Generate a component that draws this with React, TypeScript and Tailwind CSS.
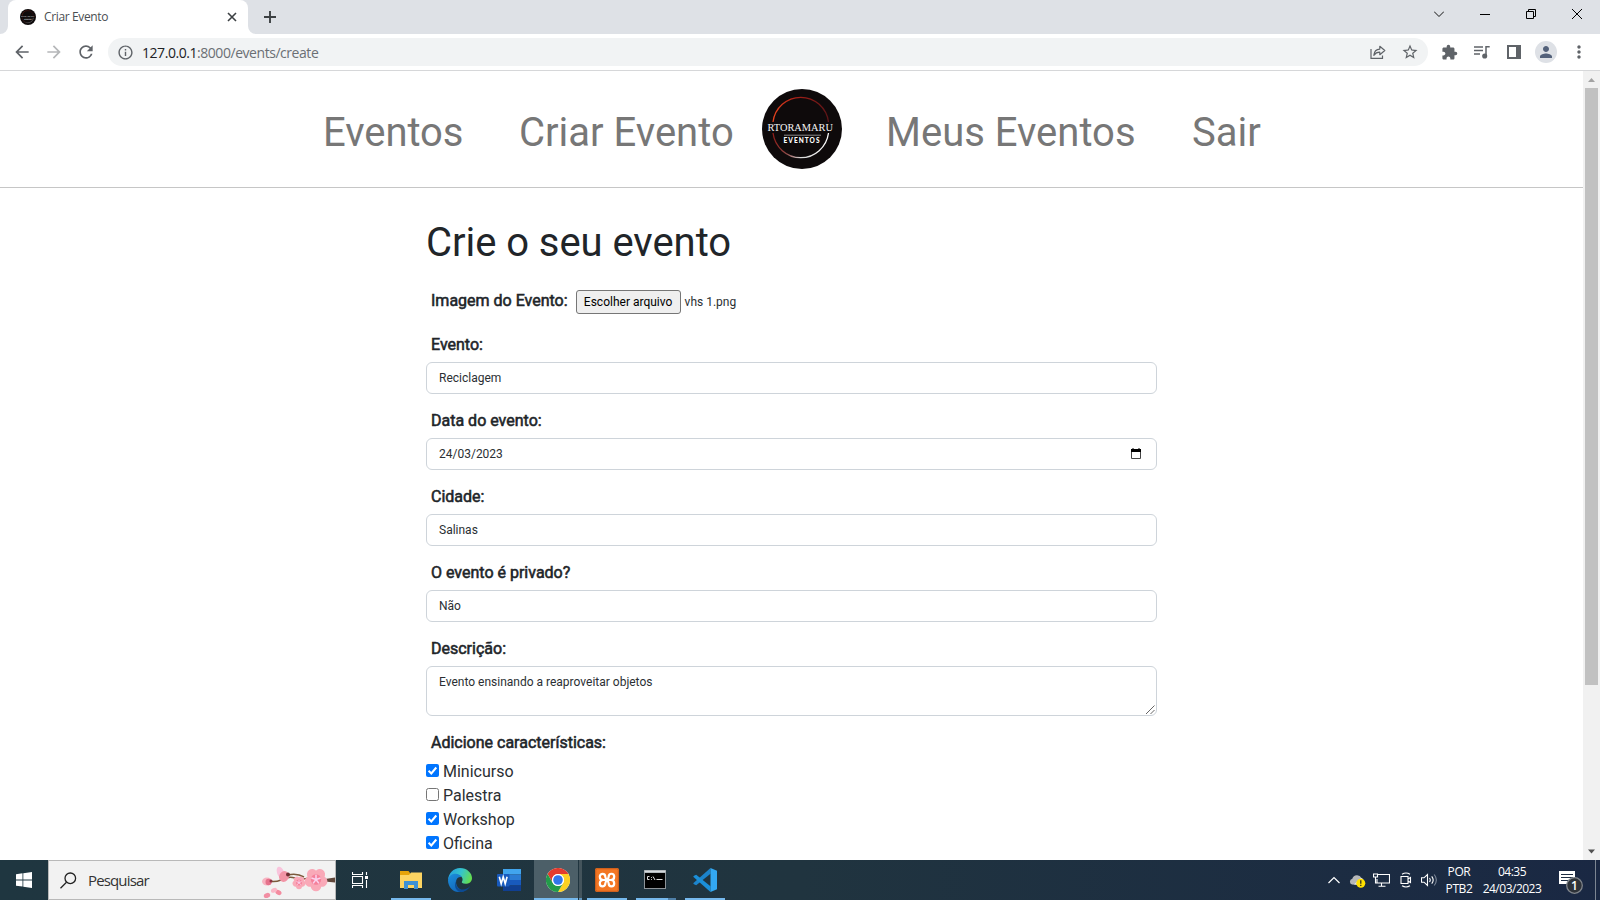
import type { ReactNode } from "react";
import {
  MdArrowBack,
  MdArrowForward,
  MdRefresh,
  MdInfoOutline,
  MdStarBorder,
  MdExtension,
  MdPerson,
  MdMoreVert,
} from "react-icons/md";

const ui = "font-['Open_Sans','Noto_Sans',sans-serif]";

function EventLogo({ className }: { className: string }) {
  return (
    <svg viewBox="0 0 80 80" className={className}>
      <defs>
        <linearGradient id="ringTop" x1="0" x2="1" y1="0" y2="0">
          <stop offset="0" stopColor="#e8431d" />
          <stop offset="0.4" stopColor="#a82018" />
          <stop offset="1" stopColor="#5c1416" />
        </linearGradient>
        <linearGradient id="ringBottom" x1="0" x2="1" y1="0" y2="0">
          <stop offset="0" stopColor="#8f1d18" />
          <stop offset="0.25" stopColor="#8f4a48" />
          <stop offset="0.5" stopColor="#d8d8d8" />
          <stop offset="1" stopColor="#fff" />
        </linearGradient>
      </defs>
      <circle cx="40" cy="40" r="40" fill="#0e0a0b" />
      <path d="M11 33A28 28.500 0 0 1 66.500 33" fill="none" stroke="url(#ringTop)" strokeWidth="1.300" />
      <path d="M11 44A28 28.500 0 0 0 66.500 44" fill="none" stroke="url(#ringBottom)" strokeWidth="1.300" />
      <text x="5.500" y="42" textLength="65.500" lengthAdjust="spacingAndGlyphs" fill="#f4f4f4" fontSize="10.500" fontFamily="Liberation Serif, serif">RTORAMARU</text>
      <path d="M22 46.200h37" stroke="#aaa" strokeWidth="0.800" />
      <text x="21.500" y="53.500" textLength="36" fill="#fff" fontSize="6.500" fontWeight="900" fontFamily="Lato, sans-serif">EVENTOS</text>
    </svg>
  );
}

function ShareIcon() {
  return (
    <svg viewBox="0 0 16 16" className="size-4" fill="none" stroke="#5f6368" strokeWidth="1.200">
      <path d="M1 5v9.400h11.500v-3" />
      <path d="M3.800 11.300c.4-4 2.600-6 6-6.200V2.300l5 4.200-5 4.200V8.200c-2.600 0-4.400.8-6 3.100z" strokeLinejoin="round" />
    </svg>
  );
}

function TabBar() {
  return (
    <div className="flex h-[34px] bg-[#dee1e6]">
      <svg viewBox="0 0 8 34" className="h-[34px] w-2">
        <path d="M8 26v8H0a8 8 0 0 0 8-8z" fill="#fff" />
      </svg>
      <div className="flex h-[34px] w-60 items-center rounded-t-lg bg-white pl-3">
        <EventLogo className="size-4" />
        <span className={`${ui} ml-2 w-[176px] text-[12px] tracking-[-0.36px] text-[#4a4e52]`}>Criar Evento</span>
        <svg viewBox="0 0 10 10" className="ml-[7px] size-[10px]" stroke="#3c4043" strokeWidth="1.600">
          <path d="M1 1l8 8M9 1l-8 8" />
        </svg>
      </div>
      <svg viewBox="0 0 8 34" className="h-[34px] w-2">
        <path d="M0 26v8h8a8 8 0 0 1-8-8z" fill="#fff" />
      </svg>
      <svg viewBox="0 0 12 12" className="mt-[11px] ml-2 size-3" stroke="#3c4043" strokeWidth="1.900">
        <path d="M6 0v12M0 6h12" />
      </svg>
      <div className="ml-auto flex h-7 items-center gap-[36px] pr-[18px]">
        <svg viewBox="0 0 10 10" className="size-[10px]" fill="none" stroke="#111">
          <path d="M0 2.500l5 5 5-5" />
        </svg>
        <svg viewBox="0 0 10 10" className="size-[10px]" stroke="#000">
          <path d="M0 5.500h10" />
        </svg>
        <svg viewBox="0 0 10 10" className="size-[10px]" fill="none" stroke="#000">
          <path d="M.5 2.500h7v7h-7zM2.500 2.500v-2h7v7h-2" />
        </svg>
        <svg viewBox="0 0 10 10" className="size-[10px]" stroke="#000">
          <path d="M0 0l10 10M10 0L0 10" />
        </svg>
      </div>
    </div>
  );
}

function Toolbar() {
  return (
    <div className="flex h-[37px] items-center border-b border-[#d6d7d9] bg-white text-[#5f6368]">
      <MdArrowBack className="ml-3 size-5" />
      <MdArrowForward className="ml-3 size-5 text-[#b5b7b9]" />
      <MdRefresh className="ml-3 size-5" />
      <div className="ml-3 flex h-7 w-[1320px] items-center rounded-full bg-[#f1f3f4]">
        <MdInfoOutline className="ml-[9px] size-[17px]" />
        <span className={`${ui} ml-2 text-[14px] tracking-[-0.45px] text-[#6b6f74]`}>
          <span className="text-[#202124]">127.0.0.1</span>:8000/events/create
        </span>
        <div className="mr-[9px] ml-auto flex items-center gap-[15px]">
          <ShareIcon />
          <MdStarBorder className="size-[18px]" />
        </div>
      </div>
      <MdExtension className="ml-[13px] size-[17px]" />
      <svg viewBox="0 0 16 14" className="ml-4 h-[14px] w-4" fill="none" stroke="#5f6368" strokeWidth="1.500">
        <path d="M0 2h9M0 5.500h9M0 9h6" />
        <path d="M12 11V1.800h3.700" />
        <circle cx="10.700" cy="11" r="1.800" fill="#5f6368" />
      </svg>
      <svg viewBox="0 0 14 14" className="ml-[17px] size-[14px]">
        <path d="M0 0h14v14H0zM2 2v10h7V2z" fill="#5f6368" fillRule="evenodd" />
      </svg>
      <div className="ml-[14px] flex size-[22px] items-center justify-center rounded-full bg-[#dee1e6] text-[#53617a]">
        <MdPerson className="size-[18px]" />
      </div>
      <MdMoreVert className="ml-3 size-5" />
    </div>
  );
}

function Nav() {
  return (
    <nav className="flex h-[117px] items-start border-b border-[#c6c6c6] pt-[18px] text-[40px] leading-[60px] text-[#777]">
      <a className="mt-[14px] ml-[323px] w-[196px] tracking-[-0.05px]">Eventos</a>
      <a className="mt-[14px] w-[243px] whitespace-nowrap">Criar Evento</a>
      <EventLogo className="size-20" />
      <a className="mt-[14px] ml-[44px] w-[306px] whitespace-nowrap">Meus Eventos</a>
      <a className="mt-[14px]">Sair</a>
    </nav>
  );
}

function Label({ children }: { children: ReactNode }) {
  return (
    <div className="pl-[5px] text-[16px] leading-6 text-[#212529] [-webkit-text-stroke:0.55px_#212529]">{children}</div>
  );
}

function Field({ label, value, icon }: { label: string; value: string; icon?: ReactNode }) {
  return (
    <div className="flex h-[76px] flex-col">
      <Label>{label}</Label>
      <div className="mt-[5px] flex h-8 items-center justify-between rounded-[6px] border border-[#ced4da] pr-[15px] pl-3 text-[12px] text-[#2b2f33]">
        <span>{value}</span>
        {icon}
      </div>
    </div>
  );
}

function CalendarIcon() {
  return (
    <svg viewBox="0 0 10 11" className="-mt-px h-[11px] w-[10px]">
      <path d="M.5 2h9v8.500h-9z" fill="none" stroke="#444" />
      <path d="M0 1h10v3H0zM1.500 0h1v1h-1zM7.500 0h1v1h-1z" fill="#000" />
    </svg>
  );
}

function Check({ label, checked }: { label: string; checked: boolean }) {
  return (
    <div className="flex h-6 items-center text-[16px] leading-6 text-[#2b2f33]">
      <svg viewBox="0 0 13 13" className="mr-1 -mt-[3px] size-[13px]">
        {checked ? (
          <>
            <rect width="13" height="13" rx="2" fill="#0075ff" />
            <path d="M2.600 6.800l2.700 2.700 5-6" fill="none" stroke="#fff" strokeWidth="2" />
          </>
        ) : (
          <rect x=".5" y=".5" width="12" height="12" rx="2" fill="#fff" stroke="#767676" />
        )}
      </svg>
      <span>{label}</span>
    </div>
  );
}

function EventForm() {
  return (
    <main className="ml-[426px] w-[731px] pt-[31px]">
      <h1 className="text-[40px] leading-[48px] tracking-[-0.05px] text-[#212529]">Crie o seu evento</h1>
      <div className="mt-[22px] flex h-[25px] items-start">
        <Label>Imagem do Evento:</Label>
        <div className="mt-px ml-2 flex h-6 w-[105px] items-center justify-center rounded-[3px] border border-[#767676] bg-[#efefef] text-[12px] text-black">
          Escolher arquivo
        </div>
        <span className="mt-px ml-1 text-[12px] leading-6 text-[#2b2f33]">vhs 1.png</span>
      </div>
      <div className="mt-[19px]">
        <Field label="Evento:" value="Reciclagem" />
        <Field label="Data do evento:" value="24/03/2023" icon={<CalendarIcon />} />
        <Field label="Cidade:" value="Salinas" />
        <Field label="O evento é privado?" value="Não" />
      </div>
      <Label>Descrição:</Label>
      <div className="mt-[5px] flex h-[50px] items-end justify-between rounded-[6px] border border-[#ced4da] pr-px pl-3 text-[12px] text-[#2b2f33]">
        <span className="self-start pt-[6px] leading-[18px]">Evento ensinando a reaproveitar objetos</span>
        <svg viewBox="0 0 9 9" className="mb-px size-[9px]" stroke="#555" strokeWidth="0.900">
          <path d="M0 9l8.500-8.500M4.500 9l4-4" />
        </svg>
      </div>
      <div className="mt-[15px]">
        <Label>Adicione características:</Label>
      </div>
      <div className="mt-[5px]">
        <Check label="Minicurso" checked />
        <Check label="Palestra" checked={false} />
        <Check label="Workshop" checked />
        <Check label="Oficina" checked />
      </div>
    </main>
  );
}

function Scrollbar() {
  return (
    <div className="flex w-[17px] flex-col items-center bg-[#f1f1f1]">
      <svg viewBox="0 0 17 17" className="size-[17px]">
        <path d="M5 11h7L8.500 7z" fill="#a3a3a3" />
      </svg>
      <div className="h-[597px] w-[13px] bg-[#c1c1c1]" />
      <svg viewBox="0 0 17 17" className="mt-auto size-[17px]">
        <path d="M5 6.500h7l-3.500 4z" fill="#505050" />
      </svg>
    </div>
  );
}

function Blossom({ x, y, r }: { x: number; y: number; r: number }) {
  return (
    <g transform={`translate(${x} ${y})`}>
      {[36, 108, 180, 252, 324].map((a) => (
        <ellipse key={a} cx="0" cy={-r * 0.56} rx={r * 0.46} ry={r * 0.46} fill="#f9a9b8" transform={`rotate(${a})`} />
      ))}
      <circle r={r * 0.45} fill="#f5809a" />
      {[0, 72, 144, 216, 288].map((a) => (
        <path key={a} d={`M0 0V${-r * 0.42}`} stroke="#fbd3ef" strokeWidth={r * 0.13} transform={`rotate(${a})`} />
      ))}
    </g>
  );
}

function CherryBranch() {
  return (
    <svg viewBox="0 0 74 36" className="h-9 w-[74px]">
      <path d="M8 19q6 1.500 12-1M27 13q9-2 16 2M20 18q7-4 14-2t14 0" fill="none" stroke="#7c5a3c" strokeWidth="1.500" />
      <path d="M64 17l10-1.500v5L64 19.500z" fill="#60463a" />
      <ellipse cx="6" cy="19.500" rx="5" ry="4" fill="#f7b3c1" />
      <ellipse cx="7.500" cy="20" rx="3" ry="3.300" fill="#e5728c" />
      <circle cx="10" cy="19" r="1.500" fill="#8b3544" />
      <ellipse cx="19.500" cy="10.500" rx="3.500" ry="6" fill="#f9c4dc" transform="rotate(-20 19.500 10.500)" />
      <ellipse cx="23" cy="14.500" rx="4.800" ry="5.500" fill="#f294a6" transform="rotate(25 23 14.500)" />
      <circle cx="27" cy="12.500" r="2" fill="#6e2d31" />
      <ellipse cx="17.500" cy="30.500" rx="3.200" ry="2.300" fill="#f48b9f" transform="rotate(30 17.500 30.500)" />
      <ellipse cx="13" cy="28.300" rx="3.200" ry="2.200" fill="#fab6c6" transform="rotate(-25 13 28.300)" />
      <ellipse cx="6" cy="33.500" rx="3.300" ry="2.500" fill="#f28fa4" transform="rotate(-20 6 33.500)" />
      <Blossom x={38} y={20.5} r={6.5} />
      <Blossom x={55} y={17.5} r={11.5} />
    </svg>
  );
}

function TaskSlot({ children, bar }: { children: ReactNode; bar?: ReactNode }) {
  return (
    <div className="mr-px flex h-10 w-12 flex-col items-center">
      <div className="flex h-[38px] items-center justify-center pt-[2px]">{children}</div>
      {bar}
    </div>
  );
}

const fullBar = <div className="h-[2px] w-10 bg-[#76b9ed]" />;

function Taskbar() {
  return (
    <div className={`flex h-10 bg-linear-to-r from-[#1f3640] via-[#20343f] to-[#1a2843] ${ui} text-white`}>
      <div className="flex w-12 items-center justify-center">
        <svg viewBox="0 0 16 16" className="size-4" fill="#fff">
          <path d="M0 2.200l6.500-.9v6.200H0zM7.300 1.200L16 0v7.500H7.300zM0 8.400h6.500v6.200L0 13.700zM7.300 8.400H16V16l-8.700-1.200z" />
        </svg>
      </div>
      <div className="flex w-72 items-center overflow-hidden border border-[#b9b9b9] bg-[#f2f2f2]">
        <svg viewBox="0 0 17 17" className="ml-[11px] size-[17px]" fill="none" stroke="#222" strokeWidth="1.300">
          <circle cx="10.300" cy="6.300" r="5.300" />
          <path d="M6.500 10.200L.5 16.300" />
        </svg>
        <span className="mt-px ml-[11px] w-[120px] text-[15px] tracking-[-0.85px] text-[#333]">Pesquisar</span>
        <div className="ml-auto">
          <CherryBranch />
        </div>
      </div>
      <div className="mr-[3px] flex w-12 items-center justify-center">
        <svg viewBox="0 0 16 16" className="size-4" fill="none" stroke="#fff" strokeWidth="1.100">
          <path d="M.5 4.500h10v7H.5zM.5 0v2.500h10V0M.5 16v-2.500h10V16M14.500 0v3M14.500 8v8" />
          <path d="M13 4h3v3h-3z" fill="#fff" stroke="none" />
        </svg>
      </div>
      <TaskSlot bar={fullBar}>
        <svg viewBox="0 0 22 18" className="h-[18px] w-[22px]">
          <path d="M0 0h8.500l1.500 2v4H0z" fill="#e5a30a" />
          <path d="M0 4h9l2-2.500h11V17H0z" fill="#fcd462" />
          <path d="M4 10h14v8h-4v-4H8v4H4z" fill="#3d91d6" />
        </svg>
      </TaskSlot>
      <TaskSlot>
        <svg viewBox="0 0 24 24" className="size-6">
          <defs>
            <linearGradient id="edgeTop" x1="0" x2="1" y1="0.300" y2="0.600">
              <stop offset="0" stopColor="#259fe0" />
              <stop offset="0.500" stopColor="#35c4cc" />
              <stop offset="1" stopColor="#66df4b" />
            </linearGradient>
            <linearGradient id="edgeBody" x1="0" x2="0.600" y1="0" y2="1">
              <stop offset="0" stopColor="#1c8fdd" />
              <stop offset="1" stopColor="#1267b8" />
            </linearGradient>
          </defs>
          <path d="M0 12C.5 5 5.500 0 12 0c7 0 12 5 12 10 0 4-3 5.800-6.500 5.800-3 0-4.300-1.200-3.500-2.300.9-1.200.9-3.500-.8-5C9 4.800 2 7 0 12z" fill="url(#edgeTop)" />
          <path d="M0 12C1 7.500 4.500 5.600 8 5.800c3.300.2 5 1.800 5.800 3.200C10.500 8.500 8 10.500 8 14c0 5 4 8 8 9C7 26.500 0 20.500 0 12z" fill="url(#edgeBody)" />
          <path d="M8.500 12.500c-1.500 4 .5 8.500 5.500 9 3 .3 6.300-1 8.300-3.800-1.800 4-5.800 6.300-9.800 6.300C7 23 5.800 16.500 8.500 12.500z" fill="#0c4a92" />
        </svg>
      </TaskSlot>
      <TaskSlot>
        <svg viewBox="0 0 24 22" className="h-[22px] w-6">
          <path d="M6 0h18v5.500H6z" fill="#41a5ee" />
          <path d="M6 5.500h18V11H6z" fill="#2b7cd3" />
          <path d="M6 11h18v5.500H6z" fill="#185abd" />
          <path d="M6 16.500h18V22H6z" fill="#103f91" />
          <rect y="5" width="12.500" height="12.500" rx="1" fill="#185abd" />
          <path d="M2.300 7.800l1.900 7 2-7 2 7 1.900-7" fill="none" stroke="#fff" strokeWidth="1.600" />
        </svg>
      </TaskSlot>
      <div className="mr-px flex h-10 w-12">
        <div className="flex w-11 flex-col bg-[#4c5f68]">
          <div className="flex h-[38px] items-center justify-center pt-[2px] pl-1">
            <svg viewBox="0 0 24 24" className="size-6">
              <circle cx="12" cy="12" r="12" fill="#fff" />
              <path d="M1.600 6A12 12 0 0 1 22.400 6H12a6 6 0 0 0-5.200 9z" fill="#e33b2e" />
              <path d="M22.400 6A12 12 0 0 1 12 24l5.200-9A6 6 0 0 0 12 6z" fill="#fdd023" />
              <path d="M12 24A12 12 0 0 1 1.600 6l5.200 9a6 6 0 0 0 10.400 0z" fill="#239b4a" />
              <circle cx="12" cy="12" r="6" fill="#fff" />
              <circle cx="12" cy="12" r="4.800" fill="#3076ea" />
            </svg>
          </div>
          <div className="h-[2px] bg-[#76b9ed]" />
        </div>
        <div className="ml-px flex w-[3px] flex-col justify-end bg-[#44545c]">
          <div className="h-[2px] bg-[#6297c0]" />
        </div>
      </div>
      <TaskSlot bar={fullBar}>
        <svg viewBox="0 0 24 24" className="size-6">
          <rect width="24" height="24" rx="2" fill="#f37623" />
          <rect x=".7" y=".7" width="22.600" height="22.600" rx="1.500" fill="none" stroke="#c65a1c" />
          <path
            d="M10.300 8.800C10.300 5 4.800 5 4.800 8.500c0 2.300 1.700 3.500 3.400 3.500-1.900 0-3.400 1.200-3.400 3.500 0 3.700 5.500 3.700 5.500 0 0-3 3.400-4 3.400-7 0-3.700 5.500-3.700 5.500 0 0 2.300-1.600 3.500-3.300 3.500 1.800 0 3.300 1.200 3.300 3.500 0 3.700-5.500 3.700-5.500 0 0-3-3.400-4-3.400-6.700M8 12h8"
            fill="none"
            stroke="#fff"
            strokeWidth="2.200"
            strokeLinecap="round"
          />
        </svg>
      </TaskSlot>
      <TaskSlot
        bar={
          <div className="flex h-[2px] w-10">
            <div className="w-8 bg-[#76b9ed]" />
            <div className="w-2 bg-[#4f80a8]" />
          </div>
        }
      >
        <svg viewBox="0 0 22 19" className="-mt-px mr-[2px] h-[19px] w-[22px]">
          <path d="M0 0h22v19H0z" fill="#8d9499" />
          <path d="M.5.500h21v2H.5z" fill="#d5dadd" />
          <path d="M1 3h20v15H1z" fill="#000" />
          <path d="M5.500 6.500H3.500v3h2M7.500 7v.8M7.500 9v.8M9 6.500l2 3.500M12.500 9.500h6" fill="none" stroke="#ddd" />
        </svg>
      </TaskSlot>
      <TaskSlot bar={fullBar}>
        <svg viewBox="0 0 24 24" className="size-6">
          <path d="M17.500 5.800L3.200 17.200 1 16.300.2 15.200 17.500 0z" fill="#1c84cc" />
          <path d="M17.500 18.200L3.200 6.800 1 7.700.2 8.800 17.500 24z" fill="#1b8fd8" />
          <path d="M17.500 0L24 2.800v18.400L17.500 24z" fill="#33a8f2" />
        </svg>
      </TaskSlot>
      <div className="ml-auto flex items-center">
        <svg viewBox="0 0 12 8" className="h-2 w-3" fill="none" stroke="#fff" strokeWidth="1.200">
          <path d="M.5 7L6 1.500 11.500 7" />
        </svg>
        <svg viewBox="0 0 17 14" className="mt-px ml-[9px] h-[14px] w-[17px]">
          <path d="M3 10.500a3 3 0 0 1 .3-5.800A5 5 0 0 1 12.500 4c1.500.5 2 1 2 3l-5 4z" fill="#b5b7b9" />
          <path d="M5 10.500l7-6.500c3 1 3 6.500-3 6.500z" fill="#ececec" />
          <circle cx="11.800" cy="9.300" r="4.500" fill="#ffe000" />
          <path d="M11.800 6.300v3.500M11.800 10.800v1.200" stroke="#222" strokeWidth="1.200" />
        </svg>
        <svg viewBox="0 0 17 14" className="ml-[7px] h-[14px] w-[17px]" fill="none" stroke="#fff" strokeWidth="1.100">
          <path d="M5 1.500h11.500v8.500H4V6M8.500 10v3M5.500 13.300h7M.5 1h4v3h-4zM2.500 4v6H4" />
        </svg>
        <svg viewBox="0 0 12 16" className="ml-[10px] h-4 w-3" fill="none" stroke="#fff" strokeWidth="1.100">
          <path d="M1 4.500h7v7H1zM8 7l2.500-1.500v5L8 9M2 2.200q4-2.400 8 0M2 13.800q4 2.400 8 0" />
        </svg>
        <svg viewBox="0 0 17 14" className="ml-[9px] h-[14px] w-[17px]" fill="none" stroke="#fff" strokeWidth="1.100">
          <path d="M.5 4.800h2.500L6.500 1.500v11L3 9.200H.5zM8.500 5q1.500 2 0 4M10.700 3.300q3 3.700 0 7.400" />
          <path d="M13.200 1.500q4.300 5.500 0 11" stroke="#7a8596" />
        </svg>
        <div className="ml-[3px] flex w-9 flex-col items-center text-[12px] leading-[17px] tracking-[-0.4px]">
          <span>POR</span>
          <span>PTB2</span>
        </div>
        <div className="ml-px flex w-[68px] flex-col items-center text-[12px] leading-[17px] tracking-[-0.5px]">
          <span>04:35</span>
          <span>24/03/2023</span>
        </div>
        <svg viewBox="0 0 26 26" className="mt-1 ml-[12px] size-[26px]">
          <path d="M1 2h16v13h-4l-4 4v-4H1z" fill="#fff" />
          <path d="M3 5.500h12M3 8.500h12M3 11.500h8" stroke="#1c2c42" />
          <circle cx="16.500" cy="16.500" r="7.800" fill="#2d3238" stroke="#80858b" strokeWidth="1.300" />
          <text x="16.500" y="20.500" textAnchor="middle" fill="#fff" fontSize="12" fontWeight="600" fontFamily="Open Sans, sans-serif">1</text>
        </svg>
        <div className="mr-1 ml-[11px] h-10 w-px bg-[#7c8592]" />
      </div>
    </div>
  );
}

export default function App() {
  return (
    <div className="flex h-[900px] w-[1600px] flex-col overflow-hidden bg-white">
      <TabBar />
      <Toolbar />
      <div className="flex h-[789px] overflow-hidden font-[Roboto,sans-serif]">
        <div className="w-[1583px] overflow-hidden">
          <Nav />
          <EventForm />
        </div>
        <Scrollbar />
      </div>
      <Taskbar />
    </div>
  );
}
